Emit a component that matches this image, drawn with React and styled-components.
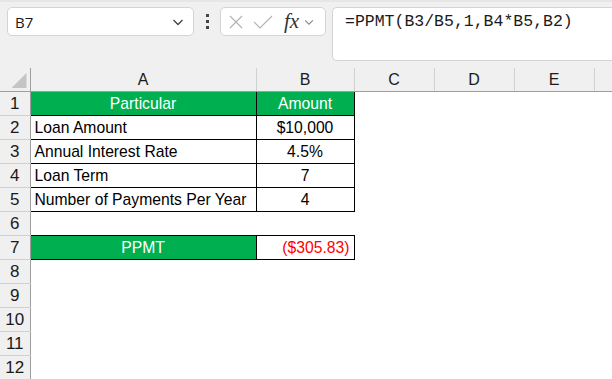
import React from "react";
import styled, { createGlobalStyle } from "styled-components";

const Global = createGlobalStyle`
  html, body {
    margin: 0;
    padding: 0;
    background: #ffffff;
    overflow: hidden;
  }
  body {
    font-family: "Liberation Sans", Arial, sans-serif;
  }
`;

const Page = styled.div`
  width: 612px;
  height: 379px;
  display: flex;
  flex-direction: column;
  background: #ffffff;
  overflow: hidden;
`;

const Toolbar = styled.div`
  height: 68px;
  flex: none;
  display: flex;
  align-items: flex-start;
  padding: 7px 0 0 7px;
  box-sizing: border-box;
  background: #f0f0f0;
  border-top: 2px solid #e6e6e6;
`;

const NameBox = styled.div`
  width: 187px;
  height: 29px;
  box-sizing: border-box;
  background: #fff;
  border: 1px solid #d4d4d4;
  border-radius: 5px;
  display: flex;
  align-items: center;
  justify-content: space-between;
  padding: 0 8px 0 7px;
  margin-top: -2px;
  font-family: "Open Sans", "Noto Sans", sans-serif;
  font-size: 15px;
  color: #1a1a1a;
`;

const Dots = styled.div`
  width: 26px;
  height: 29px;
  margin-top: -2px;
  display: flex;
  flex-direction: column;
  align-items: center;
  justify-content: center;
  gap: 3px;

  span {
    width: 3px;
    height: 3px;
    background: #444;
  }
`;

const FxBox = styled.div`
  width: 106px;
  height: 29px;
  margin-top: -2px;
  box-sizing: border-box;
  background: #fff;
  border: 1px solid #d4d4d4;
  border-radius: 5px;
  display: flex;
  align-items: center;
  padding: 0 0 0 8px;
  gap: 10px;
`;

const FxLabel = styled.span`
  font-family: "Liberation Serif", "DejaVu Serif", serif;
  font-style: italic;
  font-size: 21px;
  color: #333;
  margin-left: 1px;
  margin-right: -6px;
  line-height: 1;
`;

const FormulaBox = styled.div`
  flex: 1;
  height: 54px;
  margin: -2px 0 0 6px;
  box-sizing: border-box;
  background: #fff;
  border: 1px solid #d4d4d4;
  border-right: none;
  border-radius: 5px 0 0 5px;
  padding: 4px 0 0 12px;
  font-family: "Liberation Mono", "DejaVu Sans Mono", monospace;
  font-size: 16.5px;
  color: #1a1a1a;
`;

const Sheet = styled.table`
  border-collapse: collapse;
  table-layout: fixed;
  width: 700px;
  font-family: "Liberation Sans", Arial, sans-serif;
  font-size: 15.7px;
  color: #000;
`;

const HeadCell = styled.th`
  height: 23px;
  padding: 0;
  font-weight: normal;
  background: #f0f0f0;
  border-bottom: 1px solid #9e9e9e;
  border-right: 1px solid #d0d0d0;
  text-align: center;
  vertical-align: middle;
  font-size: 16px;
  color: #1a1a1a;
`;

const Corner = styled.th`
  height: 23px;
  padding: 0;
  background: #f0f0f0;
  border-bottom: 1px solid #9e9e9e;
  border-right: 1px solid #9e9e9e;
  position: relative;

  &::after {
    content: "";
    position: absolute;
    right: 3px;
    bottom: 3px;
    width: 15px;
    height: 15px;
    background: #c4c4c4;
    clip-path: polygon(100% 0, 100% 100%, 0 100%);
  }
`;

const RowHead = styled.th`
  height: 23px;
  padding: 0;
  font-weight: normal;
  background: #f0f0f0;
  border-right: 1px solid #9e9e9e;
  border-bottom: 1px solid #cfcfcf;
  text-align: center;
  color: #1a1a1a;
  font-size: 17px;
`;

const Cell = styled.td`
  height: 23px;
  padding: 0 4px;
  white-space: nowrap;
  overflow: hidden;
  text-align: ${(p) => p.$align || "left"};
  background: ${(p) => (p.$green ? "#00b050" : "#fff")};
  color: ${(p) => (p.$green ? "#fff" : p.$red ? "#ff0000" : "#000")};
  border: ${(p) => (p.$box ? "1px solid #000" : "none")};
`;

const columns = [
  { key: "A", w: 226 },
  { key: "B", w: 98 },
  { key: "C", w: 80 },
  { key: "D", w: 80 },
  { key: "E", w: 80 },
  { key: "F", w: 106 },
];

const table = [
  [{ v: "Particular", g: true, a: "center" }, { v: "Amount", g: true, a: "center" }],
  [{ v: "Loan Amount" }, { v: "$10,000", a: "center" }],
  [{ v: "Annual Interest Rate" }, { v: "4.5%", a: "center" }],
  [{ v: "Loan Term" }, { v: "7", a: "center" }],
  [{ v: "Number of Payments Per Year" }, { v: "4", a: "center" }],
  null,
  [{ v: "PPMT", g: true, a: "center" }, { v: "($305.83)", r: true, a: "right" }],
  null,
  null,
  null,
  null,
  null,
];

const Chevron = ({ size = 14, color = "#444" }) => (
  <svg width={size} height={size} viewBox="0 0 14 14" fill="none">
    <path d="M2.5 5 L7 9.5 L11.5 5" stroke={color} strokeWidth="1.3" />
  </svg>
);

const App = () => {
  return (
    <Page>
      <Global />
      <Toolbar>
        <NameBox>
          <span>B7</span>
          <Chevron />
        </NameBox>
        <Dots>
          <span />
          <span />
          <span />
        </Dots>
        <FxBox>
          <svg width="14" height="14" viewBox="0 0 14 14">
            <path d="M1 1 L13 13 M13 1 L1 13" stroke="#b4b4b4" strokeWidth="1.2" />
          </svg>
          <svg width="20" height="14" viewBox="0 0 20 14">
            <path d="M1 7 L7 13 L19 1" stroke="#b4b4b4" strokeWidth="1.2" fill="none" />
          </svg>
          <FxLabel>fx</FxLabel>
          <Chevron size={12} color="#888" />
        </FxBox>
        <FormulaBox>=PPMT(B3/B5,1,B4*B5,B2)</FormulaBox>
      </Toolbar>
      <Sheet>
        <colgroup>
          <col style={{ width: 30 }} />
          {columns.map((c) => (
            <col key={c.key} style={{ width: c.w }} />
          ))}
        </colgroup>
        <thead>
          <tr>
            <Corner />
            {columns.map((c) => (
              <HeadCell key={c.key}>{c.key === "F" ? "" : c.key}</HeadCell>
            ))}
          </tr>
        </thead>
        <tbody>
          {table.map((row, i) => (
            <tr key={i}>
              <RowHead>{i + 1}</RowHead>
              {columns.map((c, j) => {
                const cell = row && row[j];
                if (!cell) return <Cell key={c.key} />;
                return (
                  <Cell
                    key={c.key}
                    $box
                    $green={cell.g}
                    $red={cell.r}
                    $align={cell.a}
                  >
                    {cell.v}
                  </Cell>
                );
              })}
            </tr>
          ))}
        </tbody>
      </Sheet>
    </Page>
  );
};

export default App;
